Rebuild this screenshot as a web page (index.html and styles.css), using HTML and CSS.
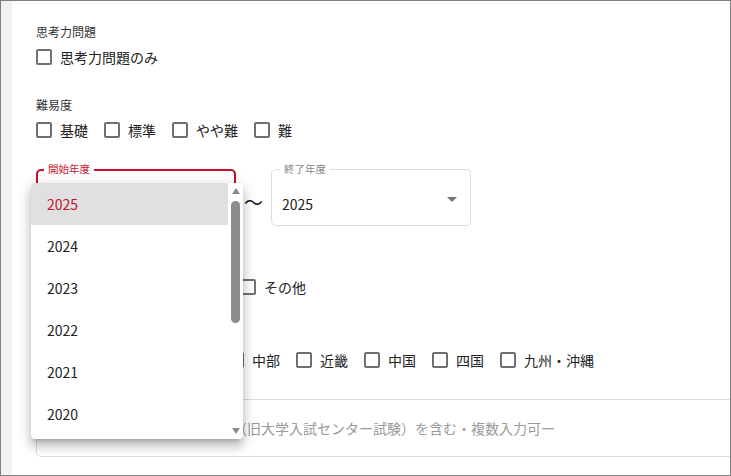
FILE: index.html
```html
<!DOCTYPE html>
<html lang="ja">
<head>
    <meta charset="UTF-8">
    <title>検索条件</title>
    <link rel="stylesheet" href="styles.css">
</head>
<body>
    <div class="frame">
        <div class="panel">
            <section class="group">
                <div class="group-title">思考力問題</div>
                <div class="check-row">
                    <label class="check"><input type="checkbox"><span>思考力問題のみ</span></label>
                </div>
            </section>

            <section class="group">
                <div class="group-title">難易度</div>
                <div class="check-row">
                    <label class="check"><input type="checkbox"><span>基礎</span></label>
                    <label class="check"><input type="checkbox"><span>標準</span></label>
                    <label class="check"><input type="checkbox"><span>やや難</span></label>
                    <label class="check"><input type="checkbox"><span>難</span></label>
                </div>
            </section>

            <div class="year-range">
                <div class="select-field is-open">
                    <span class="field-label">開始年度</span>
                    <span class="field-value">2025</span>
                    <span class="arrow"></span>
                    <!-- 開いているメニュー -->
                    <div class="menu">
                        <ul class="menu-list">
                            <li class="menu-item selected">2025</li>
                            <li class="menu-item">2024</li>
                            <li class="menu-item">2023</li>
                            <li class="menu-item">2022</li>
                            <li class="menu-item">2021</li>
                            <li class="menu-item">2020</li>
                        </ul>
                        <div class="scrollbar">
                            <span class="scroll-up"></span>
                            <span class="scroll-thumb"></span>
                            <span class="scroll-down"></span>
                        </div>
                    </div>
                </div>
                <span class="tilde">〜</span>
                <div class="select-field">
                    <span class="field-label">終了年度</span>
                    <span class="field-value">2025</span>
                    <span class="arrow"></span>
                </div>
            </div>

            <section class="group">
                <div class="group-title">設置区分</div>
                <div class="check-row">
                    <label class="check"><input type="checkbox"><span>国立</span></label>
                    <label class="check"><input type="checkbox"><span>公立</span></label>
                    <label class="check"><input type="checkbox"><span>私立</span></label>
                    <label class="check"><input type="checkbox"><span>その他</span></label>
                </div>
            </section>

            <section class="group">
                <div class="group-title">地域</div>
                <div class="check-row">
                    <label class="check"><input type="checkbox"><span>北海道・東北</span></label>
                    <label class="check"><input type="checkbox"><span>関東</span></label>
                    <label class="check"><input type="checkbox"><span>中部</span></label>
                    <label class="check"><input type="checkbox"><span>近畿</span></label>
                    <label class="check"><input type="checkbox"><span>中国</span></label>
                    <label class="check"><input type="checkbox"><span>四国</span></label>
                    <label class="check"><input type="checkbox"><span>九州・沖縄</span></label>
                </div>
            </section>

            <div class="text-field">
                <span class="placeholder">ー大学・学部名・共通テスト（旧大学入試センター試験）を含む・複数入力可ー</span>
            </div>
        </div>
    </div>
</body>
</html>
```

FILE: styles.css
```css
html, body {
    margin: 0;
    padding: 0;
}
body {
    font-family: "Noto Sans CJK JP", "Noto Sans", sans-serif;
    color: #222;
}
.frame {
    width: 731px;
    height: 476px;
    box-sizing: border-box;
    border: 1px solid #808080;
    background-color: #f1f1f1;
    overflow: hidden;
}
.panel {
    height: 100%;
    margin-left: 11px;
    background-color: #fff;
    padding: 22px 0 0 24px;
    box-sizing: border-box;
    display: flex;
    flex-direction: column;
    gap: 27px;
}
.group {
    display: flex;
    flex-direction: column;
    gap: 4px;
}
.group-title {
    font-size: 12px;
    line-height: 18px;
    color: #333;
}
.check-row {
    display: flex;
    gap: 16px;
    height: 24px;
}
.check {
    display: flex;
    align-items: center;
    gap: 8px;
    font-size: 14px;
    line-height: 24px;
    white-space: nowrap;
}
.check input {
    appearance: none;
    -webkit-appearance: none;
    width: 16px;
    height: 16px;
    margin: 0;
    box-sizing: border-box;
    border: 2px solid #707070;
    border-radius: 2px;
    background: #fff;
}
.year-range {
    display: flex;
    align-items: center;
}
.select-field {
    position: relative;
    width: 200px;
    height: 57px;
    box-sizing: border-box;
    border: 1px solid #ddd;
    border-radius: 5px;
    display: flex;
    align-items: center;
    padding: 12px 0 0 10px;
}
.select-field.is-open {
    border: 2px solid #c8102e;
    padding-left: 9px;
}
.field-label {
    position: absolute;
    top: -8px;
    left: 8px;
    padding: 0 4px;
    background: #fff;
    font-size: 10.5px;
    line-height: 14px;
    color: #888;
}
.is-open .field-label {
    top: -9px;
    left: 6px;
    color: #c8102e;
}
.field-value {
    font-size: 14px;
}
.arrow {
    position: absolute;
    right: 13px;
    top: 27px;
    width: 0;
    height: 0;
    border-left: 5px solid transparent;
    border-right: 5px solid transparent;
    border-top: 5px solid #757575;
}
.tilde {
    width: 35px;
    text-align: center;
    font-size: 19px;
    line-height: 20px;
    margin-top: 8px;
    color: #111;
}
.menu {
    position: absolute;
    left: -7px;
    top: 12px;
    width: 212px;
    height: 256px;
    background: #fff;
    border-radius: 4px;
    box-shadow: 0 5px 5px -3px rgba(0,0,0,0.2), 0 8px 10px 1px rgba(0,0,0,0.14), 0 3px 14px 2px rgba(0,0,0,0.12);
    display: flex;
    overflow: hidden;
    z-index: 10;
}
.menu-list {
    list-style: none;
    margin: 0;
    padding: 0;
    flex: 1;
    overflow: hidden;
}
.menu-item {
    height: 42px;
    line-height: 42px;
    padding-left: 16px;
    font-size: 14px;
    color: #222;
}
.menu-item.selected {
    background-color: #e0e0e0;
    color: #c8102e;
}
.scrollbar {
    width: 15px;
    display: flex;
    flex-direction: column;
    align-items: center;
    padding-top: 5px;
    box-sizing: border-box;
}
.scroll-up {
    width: 0;
    height: 0;
    border-left: 4px solid transparent;
    border-right: 4px solid transparent;
    border-bottom: 6px solid #8c8c8c;
}
.scroll-thumb {
    width: 9px;
    height: 122px;
    margin-top: 7px;
    border-radius: 5px;
    background-color: #8c8c8c;
}
.scroll-down {
    width: 0;
    height: 0;
    margin-top: auto;
    margin-bottom: 5px;
    border-left: 4px solid transparent;
    border-right: 4px solid transparent;
    border-top: 6px solid #8c8c8c;
}
.text-field {
    width: 760px;
    height: 58px;
    flex-shrink: 0;
    box-sizing: border-box;
    border: 1px solid #ddd;
    border-radius: 5px;
    display: flex;
    align-items: center;
    padding-left: 14px;
}
.placeholder {
    font-size: 14px;
    color: #9a9a9a;
    white-space: nowrap;
}
```
